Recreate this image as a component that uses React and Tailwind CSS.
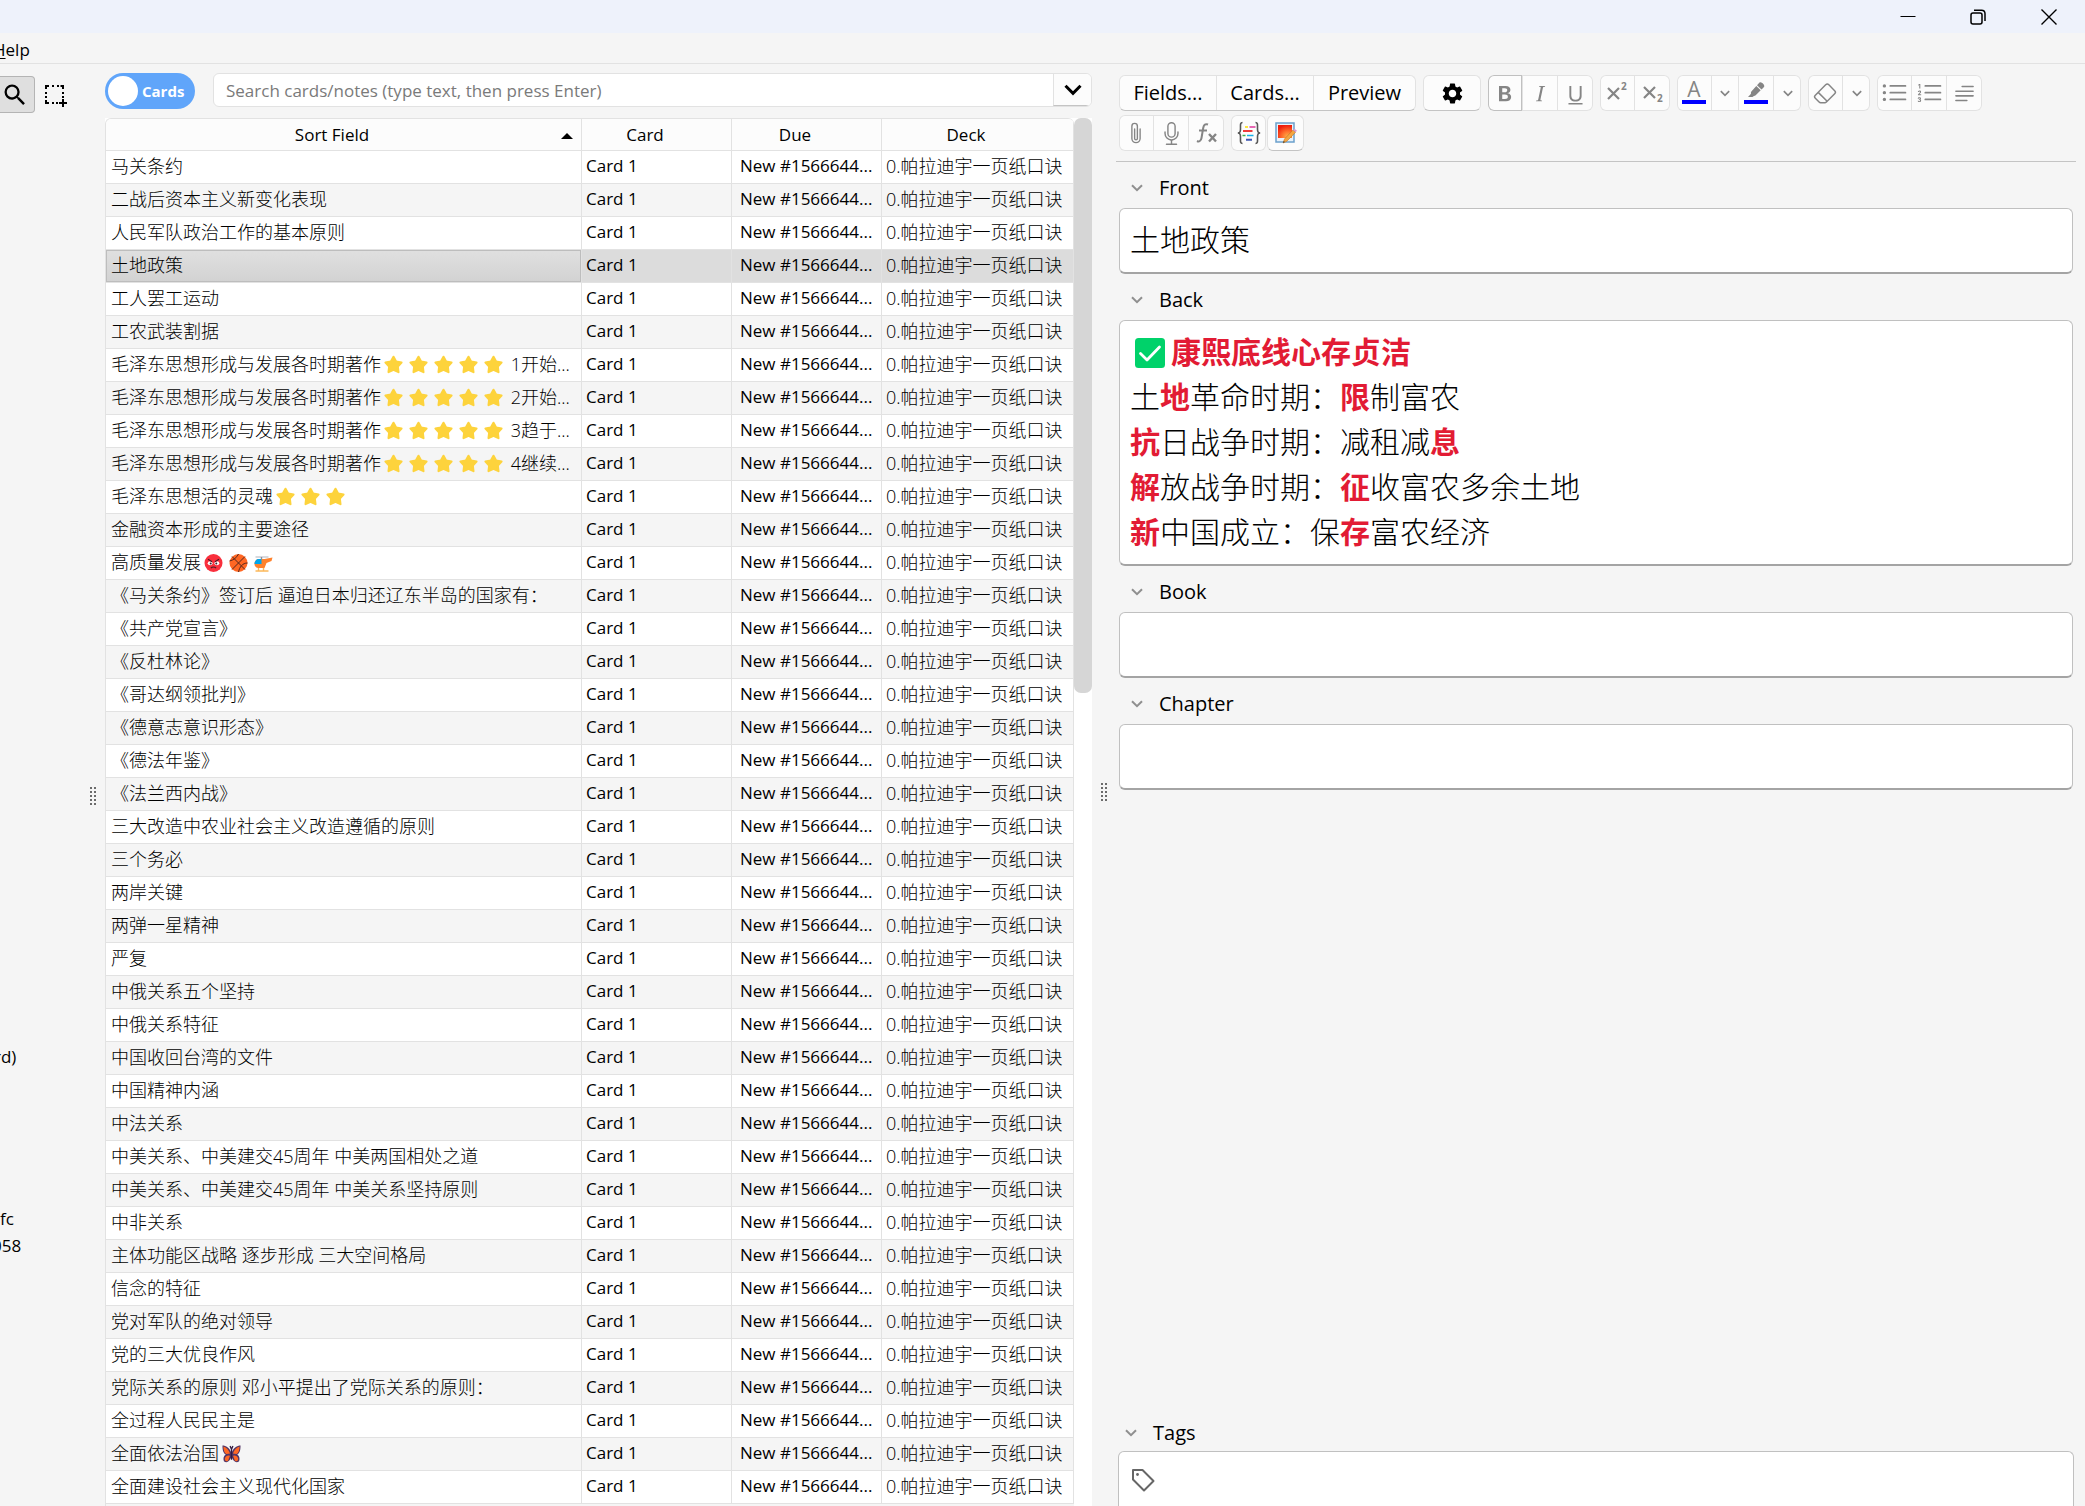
import React, { useState } from 'react';
import { BsTypeBold, BsTypeItalic, BsTypeUnderline, BsListUl, BsListOl, BsTextParagraph, BsEraser, BsPaperclip, BsMic } from 'react-icons/bs';
import { MdSettings, MdSearch } from 'react-icons/md';

const DECK = '0.帕拉迪宇一页纸口诀';
const DUE = 'New #1566644...';

const SORT_FIELDS = [
  '马关条约',
  '二战后资本主义新变化表现',
  '人民军队政治工作的基本原则',
  '土地政策',
  '工人罢工运动',
  '工农武装割据',
  '毛泽东思想形成与发展各时期著作⭐⭐⭐⭐⭐ 1开始...',
  '毛泽东思想形成与发展各时期著作⭐⭐⭐⭐⭐ 2开始...',
  '毛泽东思想形成与发展各时期著作⭐⭐⭐⭐⭐ 3趋于...',
  '毛泽东思想形成与发展各时期著作⭐⭐⭐⭐⭐ 4继续...',
  '毛泽东思想活的灵魂⭐⭐⭐',
  '金融资本形成的主要途径',
  '高质量发展😡🏀🚁',
  '《马关条约》签订后 逼迫日本归还辽东半岛的国家有：',
  '《共产党宣言》',
  '《反杜林论》',
  '《哥达纲领批判》',
  '《德意志意识形态》',
  '《德法年鉴》',
  '《法兰西内战》',
  '三大改造中农业社会主义改造遵循的原则',
  '三个务必',
  '两岸关键',
  '两弹一星精神',
  '严复',
  '中俄关系五个坚持',
  '中俄关系特征',
  '中国收回台湾的文件',
  '中国精神内涵',
  '中法关系',
  '中美关系、中美建交45周年 中美两国相处之道',
  '中美关系、中美建交45周年 中美关系坚持原则',
  '中非关系',
  '主体功能区战略 逐步形成 三大空间格局',
  '信念的特征',
  '党对军队的绝对领导',
  '党的三大优良作风',
  '党际关系的原则 邓小平提出了党际关系的原则：',
  '全过程人民民主是',
  '全面依法治国🦋',
  '全面建设社会主义现代化国家',
];

// visible tails of the sidebar tree, by row number
const TREE_TAILS = {
  34: { text: 'rd)', indent: '-ml-1.5' },
  40: { text: 'fc', indent: 'ml-0' },
  41: { text: '058', indent: '-ml-2' },
};

const Star = () => (
  <svg viewBox="0 0 18 18" className="inline-block w-[19px] h-[19px] mx-[3px] align-[-3px]">
    <path d="M9 1.7l2.500 4.500 5.100 1-3.500 3.800.6 5.200L9 14l-4.700 2.200.6-5.200-3.500-3.800 5.100-1z" fill="#fdd33c" stroke="#fdd33c" strokeWidth="2" strokeLinejoin="round" />
  </svg>
);

const Angry = () => (
  <svg viewBox="0 0 18 18" className="inline-block w-[19px] h-[18px] mx-[3px] align-[-3px]">
    <circle cx="9" cy="9" r="9" fill="#f92f3c" />
    <ellipse cx="5.6" cy="9.2" rx="2.4" ry="2" fill="#fff" />
    <ellipse cx="12.4" cy="9.2" rx="2.4" ry="2" fill="#fff" />
    <circle cx="6.2" cy="9.4" r="1" fill="#3b2030" />
    <circle cx="11.8" cy="9.4" r="1" fill="#3b2030" />
    <path d="M3.5 5.2l4 2.6M14.5 5.2l-4 2.6M6.4 14.2c1.4-1.6 3.8-1.6 5.2 0" stroke="#4b1a24" strokeWidth="1.2" fill="none" />
  </svg>
);

const Basketball = () => (
  <svg viewBox="0 0 18 18" className="inline-block w-[19px] h-[18px] mx-[3px] align-[-3px]">
    <circle cx="9" cy="9" r="9" fill="#ff6723" />
    <path d="M2.6 2.6l12.8 12.8M15.4 2.6L2.6 15.4M9 0c-2 4-5 6-9 7M18 9c-5 0-8 4-9 9" stroke="#54281f" strokeWidth="1" fill="none" />
  </svg>
);

const Helicopter = () => (
  <svg viewBox="0 0 18 18" className="inline-block w-[19px] h-[18px] mx-[3px] align-[-3px]">
    <path d="M1 3h13" stroke="#bcc0c8" strokeWidth="1.2" />
    <path d="M7 3v2" stroke="#8b8f99" strokeWidth="1.4" />
    <path d="M4 5h6l8-1.5-1 3.5-5 2-2 5H4c-2.500 0-4-2-4-4 0-3 2-5 4-5z" fill="#ff822d" />
    <path d="M0 10c0-3 2-5 4-5h3v5z" fill="#00a6ed" />
    <path d="M1 17h13M4 14v3M9 14v3" stroke="#fcb85a" strokeWidth="1.4" />
  </svg>
);

const Butterfly = () => (
  <svg viewBox="0 0 20 20" className="inline-block w-[19px] h-[20px] mx-[3px] align-[-4px]">
    <path d="M10 9C8 3 4 1 .5 1c0 4 .5 8 3.500 9.500C1.500 12 1 15 2 17.500c2.500 2.500 6 1 8-4.500 2 5.500 5.500 7 8 4.500 1-2.500.5-5.500-2-7C19 9 19.500 5 19.500 1 16 1 12 3 10 9z" fill="#533566" />
    <path d="M8.500 9.500C7 5.500 5 3 1.500 2c.2 3.500.8 7 3.500 8zM11.500 9.500c1.500-4 3.500-6.500 7-7.500-.2 3.500-.8 7-3.500 8zM8.300 12c-1.800-1-4.800.3-5.300 2.800-.4 2.400 2 3.600 3.500 2zM11.700 12c1.800-1 4.800.3 5.300 2.800.4 2.400-2 3.600-3.500 2z" fill="#ff6723" />
    <path d="M10 4v12M8.500 1.500L10 5l1.500-3.500" stroke="#321b41" strokeWidth="1.400" fill="none" />
  </svg>
);

const CheckMark = () => (
  <svg viewBox="0 0 30 30" className="inline-block w-[30px] h-[30px] ml-[5px] mr-[6px] align-[-5px]">
    <rect width="30" height="30" rx="3.500" fill="#00d26a" />
    <path d="M5.500 15.500l6.500 6.500L24.500 9" stroke="#fff" strokeWidth="2.800" fill="none" strokeLinecap="round" strokeLinejoin="round" />
  </svg>
);

const EMOJI = { '⭐': Star, '😡': Angry, '🏀': Basketball, '🚁': Helicopter, '🦋': Butterfly };

const SortText = ({ text }) =>
  text.split(/(⭐|😡|🏀|🚁|🦋)/u).map((part, i) => {
    const Icon = EMOJI[part];
    return Icon ? <Icon key={i} /> : <span key={i}>{part}</span>;
  });

const Chevron = ({ className = 'w-3 h-2', width = 2 }) => (
  <svg viewBox="0 0 12 8" className={className} fill="none" stroke="currentColor" strokeWidth={width}>
    <path d="M1 1.200l5 5 5-5" />
  </svg>
);

const Grip = () => (
  <svg viewBox="0 0 6 18" className="w-[6px] h-[18px]" fill="#6b6b6b">
    {[0, 4, 8, 12, 16].map((y) => (
      <React.Fragment key={y}>
        <rect x="0" y={y} width="2" height="2" />
        <rect x="4" y={y} width="2" height="2" />
      </React.Fragment>
    ))}
  </svg>
);

const Group = ({ children }) => (
  <div className="flex h-9 rounded-[6px] inset-ring inset-ring-[#e2e2e2] bg-[#fcfcfc] divide-x divide-[#e2e2e2] overflow-hidden">
    {children}
  </div>
);

const TextGroup = ({ children }) => (
  <div className="flex h-9 rounded-[6px] border border-[#e2e2e2] border-b-[#c4c4c4] bg-[#fcfcfc] divide-x divide-[#e2e2e2] overflow-hidden">
    {children}
  </div>
);

const Tool = ({ label, focused, children }) => (
  <button
    aria-label={label}
    className={`w-[35px] flex items-center justify-center text-[#858585] ${focused ? 'rounded-l-[6px] inset-ring inset-ring-[#c0c0c0]' : ''}`}
  >
    {children}
  </button>
);

const Drop = ({ label }) => (
  <button aria-label={label} className="w-[27px] flex items-center justify-center text-[#858585]">
    <Chevron className="w-[10px] h-[7px]" />
  </button>
);

const FieldLabel = ({ id, children }) => (
  <label id={id + '-label'} htmlFor={id} className="flex items-center gap-4 h-[46px] pl-3 pt-[6px] text-[20px]">
    <span className="text-[#8f8f8f]"><Chevron /></span>
    {children}
  </label>
);

const FIELD_BOX = 'block w-full rounded-[6px] border border-b-2 border-[#c0c0c0] border-b-[#a4a4a4] bg-white px-[10px] pt-2 pb-[10px] text-[30px] leading-[45px] font-light outline-none';

const Red = ({ children }) => <b className="font-bold text-[#e21b34]">{children}</b>;

const TitleBar = () => (
  <header className="h-[33px] shrink-0 bg-[#eef2fb] flex justify-end items-center">
    <button aria-label="Minimize" className="w-[70px] h-full flex items-center justify-center">
      <svg viewBox="0 0 16 16" className="w-4 h-4" stroke="#000" fill="none"><path d="M0.500 7.500h15" /></svg>
    </button>
    <button aria-label="Restore" className="w-[70px] h-full flex items-center justify-center">
      <svg viewBox="0 0 16 16" className="w-4 h-4" stroke="#000" strokeWidth="1.500" fill="none">
        <rect x="1" y="4" width="11" height="11" rx="2" />
        <path d="M4 1.200h7.500c2 0 3.500 1.500 3.500 3.500V12" />
      </svg>
    </button>
    <button aria-label="Close" className="w-[72px] h-full flex items-center justify-center">
      <svg viewBox="0 0 16 16" className="w-4 h-4" stroke="#000" strokeWidth="1.400" fill="none"><path d="M0.500 0.500l15 15M15.500 0.500l-15 15" /></svg>
    </button>
  </header>
);

const Sidebar = () => (
  <aside className="flex overflow-hidden">
    <div className="flex-1 min-w-0">
      <div className="flex items-start pt-3">
        <button aria-label="Search tool" className="w-[35px] h-[37px] shrink-0 flex items-center pl-px rounded-r-[4px] border border-l-0 border-[#b4b4b4] bg-[#dfdfdf]">
          <MdSearch className="w-7 h-7 shrink-0" />
        </button>
        <button aria-label="Selection tool" className="ml-[10px] mt-[9px]">
          <svg viewBox="0 0 22 22" className="w-[22px] h-[22px]" stroke="#000" strokeWidth="2" fill="none">
            <path d="M1 4V1h3M7 1h2M12 1h2M15.500 1H18v3M18 7v2M18 11v2M1 7v2M1 11v2M1 15v3h3M7 18h2M11 18h2M18 14v8M14 18h8" />
          </svg>
        </button>
      </div>
      <ul className="mt-3 text-[17px] whitespace-nowrap">
        {Array.from({ length: 42 }, (_, i) => (
          <li key={i} className="h-[27px] leading-[27px]">
            {TREE_TAILS[i] && <span className={`block ${TREE_TAILS[i].indent}`}>{TREE_TAILS[i].text}</span>}
          </li>
        ))}
      </ul>
    </div>
    <div className="w-[15px] flex items-center pt-[22px]"><Grip /></div>
  </aside>
);

const CardTable = ({ selected, onSelect }) => {
  const th = 'h-8 pr-[23px] border-b border-r border-[#e2e2e2] bg-[#fcfcfc] font-normal text-center';
  const td = 'h-[33px] pb-[2px] border-b border-r border-[#e2e2e2] truncate';
  return (
    <div className="flex-1 min-h-0 flex bg-white">
      <div className="flex-1 min-w-0 overflow-hidden rounded-t-[6px] border-t border-l border-[#e2e2e2] bg-[#f5f5f5]">
        <table className="w-full table-fixed border-separate border-spacing-0 text-[17px] leading-6">
          <colgroup>
            <col />
            <col className="w-[150px]" />
            <col className="w-[150px]" />
            <col className="w-[192px]" />
          </colgroup>
          <thead>
            <tr>
              <th className={`${th} relative`}>
                Sort Field
                <svg viewBox="0 0 12 6" className="absolute right-2 top-[14px] w-3 h-[6px]"><path d="M0 6l6-6 6 6z" /></svg>
              </th>
              <th className={th}>Card</th>
              <th className={th}>Due</th>
              <th className={th}>Deck</th>
            </tr>
          </thead>
          <tbody>
            {SORT_FIELDS.map((text, i) => {
              const active = i === selected;
              const bg = active ? 'bg-[#dcdcdc]' : i % 2 ? 'bg-[#f5f5f5]' : 'bg-white';
              return (
                <tr key={text} className={bg} onClick={() => onSelect(i)}>
                  <td className={`${td} pl-[5px] text-[18px] font-light ${active ? 'bg-linear-to-b from-[#e0e0e0] to-[#d2d2d2] inset-ring inset-ring-[#bdbdbd]' : ''}`}>
                    <SortText text={text} />
                  </td>
                  <td className={`${td} pl-1`}>Card 1</td>
                  <td className={`${td} pl-2`}>{DUE}</td>
                  <td className={`${td} pl-1 text-[18px] font-light`}>{DECK}</td>
                </tr>
              );
            })}
          </tbody>
        </table>
      </div>
      <div className="w-[18px]">
        <div className="h-[575px] rounded-[7px] bg-[#d6d6d6]" />
      </div>
    </div>
  );
};

const BrowserPane = () => {
  const [cardsMode, setCardsMode] = useState(true);
  const [selected, setSelected] = useState(3);
  return (
    <section className="flex flex-col min-w-0 min-h-0 pt-[9px]">
      <div className="flex items-start h-9 mb-[9px]">
        <label className="flex items-center w-[90px] h-9 rounded-full bg-[#60a5fa] p-[3px] text-white text-[15px] font-bold">
          <input type="checkbox" role="switch" checked={cardsMode} onChange={() => setCardsMode(!cardsMode)} className="sr-only" />
          <span className="w-[30px] h-[30px] mr-1 rounded-full bg-white" />
          Cards
        </label>
        <div className="flex flex-1 ml-[18px] h-[34px] rounded-[6px] border border-[#e2e2e2] bg-white overflow-hidden">
          <input
            aria-label="Search cards"
            placeholder="Search cards/notes (type text, then press Enter)"
            className="flex-1 min-w-0 px-3 pt-px text-[17px] outline-none placeholder:text-[#7a7a7a]"
          />
          <button aria-label="Search history" className="w-[38px] flex items-center justify-center border-l border-b border-l-[#e2e2e2] border-b-[#c4c4c4] bg-[#fcfcfc]">
            <Chevron className="w-[18px] h-3" width={2} />
          </button>
        </div>
      </div>
      <CardTable selected={selected} onSelect={setSelected} />
    </section>
  );
};

const Toolbar = () => (
  <div className="border-b border-[#c4c4c4] pt-[11px] pb-[10px] pl-[3px] flex flex-col gap-1">
    <div className="flex gap-[7px] text-[20px]">
      <TextGroup>
        <button className="w-[97px]">Fields...</button>
        <button className="w-[97px]">Cards...</button>
        <button className="w-[101px]">Preview</button>
      </TextGroup>
      <TextGroup>
        <button aria-label="Options" className="w-[56px] flex items-center justify-center"><MdSettings className="w-[25px] h-[25px]" /></button>
      </TextGroup>
      <Group>
        <Tool label="Bold" focused><BsTypeBold className="w-[25px] h-[25px]" /></Tool>
        <Tool label="Italic"><BsTypeItalic className="w-[25px] h-[25px]" /></Tool>
        <Tool label="Underline"><BsTypeUnderline className="w-[25px] h-[25px]" /></Tool>
      </Group>
      <Group>
        <Tool label="Superscript">
          <svg viewBox="0 0 24 24" className="w-6 h-6" fill="currentColor">
            <path d="M3 7l11 11M14 7L3 18" stroke="currentColor" strokeWidth="2.200" />
            <text x="16" y="9" fontSize="10" fontWeight="700">2</text>
          </svg>
        </Tool>
        <Tool label="Subscript">
          <svg viewBox="0 0 24 24" className="w-6 h-6" fill="currentColor">
            <path d="M3 6l11 11M14 6L3 17" stroke="currentColor" strokeWidth="2.200" />
            <text x="16" y="21" fontSize="10" fontWeight="700">2</text>
          </svg>
        </Tool>
      </Group>
      <Group>
        <Tool label="Text color">
          <svg viewBox="0 0 24 24" className="w-6 h-6" fill="currentColor">
            <text x="12" y="16" fontSize="21" fontWeight="500" textAnchor="middle">A</text>
            <rect y="19" width="24" height="4" fill="#00f" />
          </svg>
        </Tool>
        <Drop label="Pick text color" />
        <Tool label="Highlight">
          <svg viewBox="0 0 24 24" className="w-6 h-6" fill="currentColor">
            <path d="M15.500 1.500c1.500-1.500 6 2.500 4.500 4.500l-2.500 2.500-4.500-4.300zM12.300 5l4.400 4.300-5 5c-1 1-2.500.7-3.200 1.700H4l3-3.200c-.4-1 .2-2 .8-2.700z" />
            <rect y="19" width="24" height="4" fill="#00f" />
          </svg>
        </Tool>
        <Drop label="Pick highlight color" />
      </Group>
      <Group>
        <Tool label="Remove formatting"><BsEraser className="w-6 h-6" /></Tool>
        <Drop label="Formatting options" />
      </Group>
      <Group>
        <Tool label="Bullet list"><BsListUl className="w-[27px] h-[27px]" /></Tool>
        <Tool label="Numbered list"><BsListOl className="w-[27px] h-[27px]" /></Tool>
        <Tool label="Alignment"><BsTextParagraph className="w-[25px] h-[25px]" /></Tool>
      </Group>
    </div>
    <div className="flex gap-[7px]">
      <Group>
        <Tool label="Attach file"><BsPaperclip className="w-[22px] h-[22px]" /></Tool>
        <Tool label="Record audio"><BsMic className="w-[23px] h-[23px]" /></Tool>
        <Tool label="Equations">
          <svg viewBox="0 0 24 24" className="w-6 h-6" fill="none" stroke="currentColor">
            <path d="M13 3.500c-3-1.200-4.300.8-4.800 3.500L6.500 17c-.5 3-2.500 4-4.500 3M4 9.500h8" strokeWidth="2" />
            <path d="M14 13l7 7.500M21 13l-7 7.500" strokeWidth="2.400" />
          </svg>
        </Tool>
      </Group>
      <div className="flex gap-px">
        <Group>
          <Tool label="Code block">
            <svg viewBox="0 0 24 24" className="w-6 h-6" fill="none" strokeWidth="1.600">
              <path d="M5.500 1.500C3 1.500 3.500 4 3.500 7.500S3 11.500 1 12c2 .5 2.500 1 2.500 4.500s-.5 6 2 6M18.500 1.500c2.500 0 2 2.500 2 6s.5 4 2.500 4.500c-2 .5-2.500 1-2.500 4.500s.5 6-2 6" stroke="#555" />
              <path d="M8 6h3" stroke="#ffe100" />
              <path d="M12.500 6h6" stroke="#e0379c" />
              <path d="M6 10h9.500" stroke="#ef3b3b" strokeWidth="2" />
              <path d="M5.500 14.500h3" stroke="#3fae49" />
              <path d="M10 14.500h6.500" stroke="#18b0e8" />
              <path d="M9 18.800h6" stroke="#3d56b2" strokeWidth="2" />
            </svg>
          </Tool>
        </Group>
        <TextGroup>
          <Tool label="Image occlusion">
            <svg viewBox="0 0 24 24" className="w-6 h-6">
              <defs>
                <radialGradient id="sun" cx="0.700" cy="0.900" r="0.900">
                  <stop offset="0" stopColor="#ffb347" />
                  <stop offset="0.500" stopColor="#ff6a2a" />
                  <stop offset="1" stopColor="#ee1c0c" />
                </radialGradient>
              </defs>
              <rect x="2" y="2" width="18" height="19" fill="#e9f2fa" stroke="#6ba0cc" strokeWidth="1.500" />
              <rect x="4" y="4" width="14" height="13" fill="url(#sun)" />
              <path d="M9 22l1.500-4L19 9l2.500 2.300-8.700 9z" fill="#f5a540" stroke="#b8752a" strokeWidth="0.600" />
              <path d="M19 9l1.500-1.200 2.500 2-1.500 1.500z" fill="#d79ad6" />
              <path d="M9 22l.8-2 1 1z" fill="#333" />
            </svg>
          </Tool>
        </TextGroup>
      </div>
    </div>
  </div>
);

const EditorPane = () => (
  <section className="flex flex-col min-w-0 min-h-0 pr-[9px]">
    <Toolbar />
    <div className="flex-1 pl-[3px] pr-[3px]">
      <FieldLabel id="front">Front</FieldLabel>
      <input id="front" defaultValue="土地政策" className={FIELD_BOX} />
      <FieldLabel id="back">Back</FieldLabel>
      <div id="back" role="textbox" aria-labelledby="back-label" contentEditable suppressContentEditableWarning className={FIELD_BOX}>
        <p className="h-[45px]"><CheckMark /><Red>康熙底线心存贞洁</Red></p>
        <p className="h-[45px]">土<Red>地</Red>革命时期：<Red>限</Red>制富农</p>
        <p className="h-[45px]"><Red>抗</Red>日战争时期：减租减<Red>息</Red></p>
        <p className="h-[45px]"><Red>解</Red>放战争时期：<Red>征</Red>收富农多余土地</p>
        <p className="h-[45px]"><Red>新</Red>中国成立：保<Red>存</Red>富农经济</p>
      </div>
      <FieldLabel id="book">Book</FieldLabel>
      <input id="book" className={FIELD_BOX} />
      <FieldLabel id="chapter">Chapter</FieldLabel>
      <input id="chapter" className={FIELD_BOX} />
    </div>
    <div className="pl-[2px] pr-[2px]">
      <label htmlFor="tags" className="flex items-center gap-4 h-[40px] pl-[7px] pt-1 text-[20px]">
        <span className="text-[#8f8f8f]"><Chevron /></span>
        Tags
      </label>
      <div className="h-[55px] flex items-center pl-3 pt-[2px] rounded-t-[6px] border border-b-0 border-[#c0c0c0] bg-white">
        <svg viewBox="0 0 24 24" className="w-6 h-6" fill="none" stroke="#666" strokeWidth="2" strokeLinejoin="round">
          <path d="M2 2h9.500L22.500 13l-9.500 9.500L2 11.500z" />
          <circle cx="6.500" cy="6.500" r="1.400" fill="#666" stroke="none" />
        </svg>
        <input id="tags" className="flex-1 ml-2 text-[20px] outline-none" />
      </div>
    </div>
  </section>
);

const App = () => (
  <div className='h-screen flex flex-col overflow-hidden bg-[#f5f5f5] text-black font-["Open_Sans","Noto_Sans_CJK_SC",sans-serif]'>
    <TitleBar />
    <nav className="h-[31px] shrink-0 border-b border-[#e2e2e2] flex items-center overflow-hidden pt-1 text-[17px]">
      <button className="-ml-[7px]"><u className="underline-offset-2">H</u>elp</button>
    </nav>
    <main className="flex-1 min-h-0 grid grid-cols-[105px_987fr_24px_969fr] grid-rows-[minmax(0,1fr)]">
      <Sidebar />
      <BrowserPane />
      <div className="flex items-center pl-[9px] pt-[14px]"><Grip /></div>
      <EditorPane />
    </main>
  </div>
);

export default App;
